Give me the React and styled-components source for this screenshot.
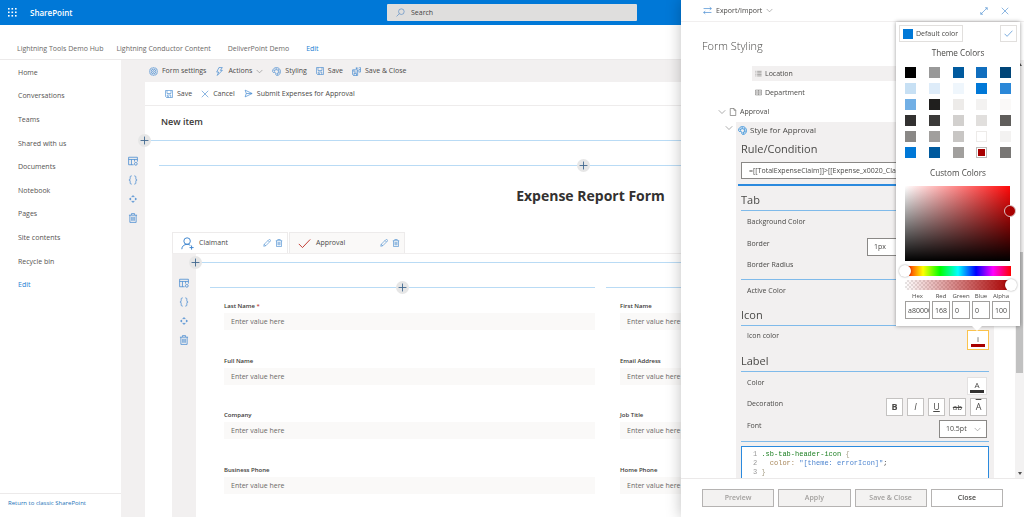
import React, { useState } from 'react';
import styled, { createGlobalStyle } from 'styled-components';

const GlobalStyle = createGlobalStyle`
  * {
    box-sizing: border-box;
  }

  body {
    margin: 0;
    background: #fff;
    color: #4a4947;
    font-family: 'Open Sans', 'Noto Sans', sans-serif;
    font-size: 7px;
    line-height: 12px;
    overflow: hidden;
  }

  button, input, select {
    font: inherit;
    color: inherit;
    margin: 0;
    padding: 0;
    border: 0;
    border-radius: 0;
    background: transparent;
    outline: none;
  }

  button {
    cursor: pointer;
  }

  h1, h2, h3, p, ul {
    margin: 0;
    padding: 0;
    font-weight: 400;
    list-style: none;
  }

  a {
    color: inherit;
    text-decoration: none;
  }
`;

/* icons */

const Svg = styled.svg`
  width: ${(p) => p.$size || 9}px;
  height: ${(p) => p.$size || 9}px;
  flex: none;
  display: block;
  fill: none;
  stroke: ${(p) => p.$color || '#3f86cf'};
  stroke-width: ${(p) => p.$weight || 1.2};
`;

const shapes = {
  settings: (
    <>
      <path d="M8 .8l1.6 1.1 1.9-.4 1 1.7 1.8.8v1.9L15.400 8l-1.100 2.100v1.900l-1.800.8-1 1.700-1.900-.4L8 15.200l-1.600-1.100-1.900.4-1-1.700-1.800-.8v-1.900L.6 8l1.100-2.100V4l1.800-.8 1-1.700 1.900.4z" />
      <circle cx="8" cy="8" r="4.200" />
      <circle cx="8" cy="8" r="1.600" />
    </>
  ),
  bolt: <path d="M7 1h6L9.500 6H13L4 15l2.500-6H3z" />,
  chevron: <path d="M1.500 4.500L8 11l6.500-6.500" />,
  palette: (
    <>
      <path d="M8 1C4 1 1 4 1 7.500c0 2 1.500 2.500 3 2.200 1.600-.3 2.800.3 2.600 2C6.400 14 7.500 15 9 15c3.500 0 6-3 6-7s-3-7-7-7z" />
      <circle cx="4.500" cy="6.500" r="1" />
      <circle cx="7.500" cy="4" r="1" />
      <circle cx="11" cy="5.500" r="1" />
      <circle cx="12" cy="9" r="1" />
      <circle cx="9.800" cy="12" r="1" />
    </>
  ),
  save: <path d="M1 1h14v14H3L1 13zM4 1v6h8V1M4.500 15v-5h7v5M6.800 12v3" />,
  saveClose: (
    <>
      <path d="M1 5h9v10H2.500L1 13.500zM3.500 5v4h5M3.500 15v-3.500h4.500V15" />
      <path d="M6.500 2h5M8 1v3M13 1h2v8h-3M12 4.500h3M10 7h3" />
    </>
  ),
  close: <path d="M1.500 1.500l13 13M14.500 1.500l-13 13" />,
  send: <path d="M2 2l12.500 6L2 14l2-6zM4 8h10" />,
  table: (
    <>
      <path d="M9 14H1V2h14v7M1 5.500h14M5.500 5.500V14M10.500 5.500V9" />
      <circle cx="12.500" cy="12.500" r="2.200" />
    </>
  ),
  braces: <path d="M6 1.500H5C3.500 1.500 3.500 3 3.500 4.500S3.500 8 1.500 8c2 0 2 2 2 3.500s0 3 1.500 3h1M10 1.500h1c1.500 0 1.500 1.500 1.500 3S12.500 8 14.500 8c-2 0-2 2-2 3.500s0 3-1.500 3h-1" />,
  move: <path d="M6.200 4.200L8 2.400l1.800 1.800zM6.200 11.800L8 13.600l1.800-1.800zM4.200 6.200L2.400 8l1.800 1.800zM11.800 6.200L13.600 8l-1.800 1.800z" />,
  trash: <path d="M1.500 3.500h13M5.500 3V1h5v2M3 3.500V15h10V3.500M6 6v6.500M8 6v6.500M10 6v6.500" />,
  pencil: <path d="M1.500 14.500l1-4L11.500 1.500a1.500 1.500 0 0 1 3 3L5.500 13.500zM10 3l3 3M2.500 10.500l3 3" />,
  person: (
    <>
      <circle cx="7.500" cy="5" r="4" />
      <path d="M1 15c0-3.500 2.800-6 6.500-6 1.700 0 3 .5 4 1.300M13 10.500v5M10.500 13h5" />
    </>
  ),
  check: <path d="M1 8.500l4.500 4.500L15 3" />,
  search: (
    <>
      <circle cx="9.500" cy="6.500" r="5" />
      <path d="M6 10l-5 5" />
    </>
  ),
  swap: <path d="M1 4.500h14M12 2l2.800 2.500L12 7M15 11.500H1M4 9l-2.800 2.500L4 14" />,
  expand: <path d="M10 1.500h4.500V6M14.500 1.500l-13 13M1.500 10v4.500H6" />,
  page: <path d="M2.500 1h7.500l3.500 3.500V15h-11zM10 1v3.500h3.500" />,
  list: <path d="M1 3h2M5 3h10M1 6.500h2M5 6.500h10M1 10h2M5 10h10M1 13.500h2M5 13.500h10" />,
  lookup: <path d="M1 2.500h14v11H1zM8 2.500v11M3 5.500h3M3 8h3M3 10.500h3M10 5.500h3M10 8h3M10 10.500h3" />,
  plus: <path d="M8 1v14M1 8h14" />,
};

const Icon = ({ name, size, color, weight }) => (
  <Svg viewBox="0 0 16 16" $size={size} $color={color} $weight={weight} aria-hidden="true">
    {shapes[name]}
  </Svg>
);

const Waffle = () => (
  <Svg viewBox="0 0 9 9" $size={9}>
    {[0, 3.5, 7].map((y) =>
      [0, 3.5, 7].map((x) => (
        <rect key={`${x}-${y}`} x={x} y={y} width="1.600" height="1.600" fill="#fff" stroke="none" />
      ))
    )}
  </Svg>
);

/* suite header */

const SuiteBar = styled.header`
  display: grid;
  grid-template-columns: 1fr 250px 1fr;
  align-items: center;
  height: 25px;
  background: #0078d7;
`;

const Brand = styled.div`
  display: flex;
  align-items: center;
  gap: 13px;
  padding-left: 8px;
  color: #fff;
  font-size: 8px;
  font-weight: 600;
`;

const SearchBox = styled.label`
  display: flex;
  align-items: center;
  gap: 6px;
  height: 17px;
  padding-left: 9px;
  border-radius: 1px;
  background: #dfdedd;

  input {
    flex: 1;
  }

  input::placeholder {
    color: #444;
    opacity: 1;
  }
`;

const HubNav = styled.nav`
  display: flex;
  align-items: flex-end;
  height: 35px;
  padding: 0 17px 4px;
  gap: 13px;
  border-bottom: 1px solid #eceaea;
  color: #6b6967;
`;

const HubLink = styled.a`
  margin-right: ${(p) => (p.$wide ? 4 : 0)}px;
  color: ${(p) => (p.$blue ? '#1b80d3' : 'inherit')};
`;

/* page */

const Page = styled.div`
  display: flex;
  flex-direction: column;
  height: 100vh;
  overflow: hidden;
`;

const Columns = styled.div`
  display: flex;
  flex: 1;
  min-height: 0;
`;

const SideNav = styled.nav`
  display: flex;
  flex-direction: column;
  justify-content: space-between;
  width: 121px;
  flex: none;
  padding-top: 1px;
`;

const NavList = styled.ul`
  display: grid;
  grid-template-rows: repeat(10, 1fr);
  align-items: center;
  height: 236px;
  padding-left: 18px;
`;

const NavLink = styled.a`
  color: ${(p) => (p.$blue ? '#1b80d3' : '#555351')};
`;

const ClassicLink = styled.a`
  height: 24px;
  padding: 3px 8px;
  border-top: 1px solid #eceaea;
  font-size: 6px;
  color: #1b72b8;
`;

const Editor = styled.main`
  display: flex;
  flex-direction: column;
  flex: 1;
  min-width: 0;
  background: #f2f0f0;
`;

const CommandBar = styled.div`
  display: flex;
  align-items: center;
  gap: 9px;
  height: 22px;
  flex: none;
  padding-left: 28px;
`;

const ActionBar = styled.div`
  display: flex;
  align-items: center;
  gap: 9px;
  height: 24px;
  padding-left: 20px;
  border-bottom: 1px solid #eeecec;
`;

const Command = styled.button`
  display: flex;
  align-items: center;
  gap: 4px;
  white-space: nowrap;
`;

const EditorBody = styled.div`
  display: flex;
  flex: 1;
  min-height: 0;
`;

const Rail = styled.div`
  display: flex;
  flex-direction: column;
  align-items: center;
  gap: 9px;
  flex: none;
  width: 24px;
  padding-top: ${(p) => p.$top}px;
  background: #f2f0f0;
`;

const IconButton = styled.button`
  display: flex;
  align-items: center;
  justify-content: center;
`;

const FormArea = styled.div`
  flex: 1;
  min-width: 0;
  background: #fff;
`;

const ItemTitle = styled.h2`
  height: 34px;
  padding: 10px 16px;
  font-size: 9px;
  font-weight: 600;
  color: #3a3836;
`;

const Divider = styled.div`
  position: relative;
  height: 1px;
  background: #b9dbf5;
`;

const AddButton = styled.button`
  position: absolute;
  top: -6px;
  left: ${(p) => (p.$middle ? '50%' : '0')};
  display: flex;
  align-items: center;
  justify-content: center;
  width: 13px;
  height: 13px;
  margin-left: -7px;
  border-radius: 50%;
  background: #e6e6e6;
`;

const Section = styled.section`
  padding: 24px 15px 0 14px;
`;

const SectionBody = styled.div`
  padding: 20px 0 0 13px;
`;

const FormTitle = styled.h1`
  margin-bottom: 26px;
  text-align: center;
  font-size: 14px;
  line-height: 20px;
  font-weight: 700;
  color: #333130;
`;

const Tabs = styled.div`
  display: flex;
  gap: 1px;
`;

const Tab = styled.div`
  display: flex;
  align-items: center;
  gap: 4px;
  width: 116px;
  height: 21px;
  padding: 0 4px 0 8px;
  border: 1px solid #edebeb;
  border-bottom: 0;
  background: ${(p) => (p.$active ? '#fff' : '#faf9f8')};
`;

const TabButton = styled.button`
  display: flex;
  flex: 1;
  align-items: center;
  gap: 5px;
`;

const TabPanel = styled.div`
  display: flex;
  height: 280px;
  border-top: 1px solid #f0eeee;
`;

const TabBody = styled.div`
  flex: 1;
  min-width: 0;
  padding-top: 8px;
`;

const FieldColumns = styled.div`
  display: grid;
  grid-template-columns: 1fr 1fr;
  gap: 11px;
  padding: 24px 18px 0 14px;
`;

const Fields = styled.div`
  display: grid;
  grid-template-rows: repeat(4, 1fr);
  height: 230px;
  padding: 12px 0 0 14px;
`;

const Field = styled.label`
  display: block;
  font-size: 6px;
  font-weight: 600;
  color: #3a3836;

  em {
    font-style: normal;
    color: #c0392f;
  }

  input {
    display: block;
    width: 100%;
    height: 17px;
    margin-top: 1px;
    padding-left: 7px;
    background: #faf9f8;
    font-size: 7px;
    font-weight: 400;
  }

  input::placeholder {
    color: #6b6967;
    opacity: 1;
  }
`;

/* styling panel */

const Panel = styled.aside`
  position: fixed;
  top: 0;
  right: 0;
  bottom: 0;
  display: flex;
  flex-direction: column;
  width: 343px;
  background: #fff;
  box-shadow: 0 0 14px rgba(0, 0, 0, 0.25);
`;

const PanelBar = styled.div`
  display: flex;
  align-items: center;
  justify-content: space-between;
  flex: none;
  height: 22px;
  padding: 0 15px 0 22px;
  border-bottom: 1px solid #f1efef;
`;

const BarGroup = styled.div`
  display: flex;
  gap: 13px;
`;

const PanelTitle = styled.h2`
  flex: none;
  height: 38px;
  padding: 15px 21px 0;
  font-size: 11px;
  line-height: 18px;
  font-weight: 300;
`;

const PanelBody = styled.div`
  display: flex;
  flex: 1;
  min-height: 0;
  overflow: hidden;
`;

const PanelScroll = styled.div`
  flex: 1;
  min-width: 0;
  padding: 6px 21px 0 37px;
`;

const ScrollBar = styled.div`
  display: flex;
  flex-direction: column;
  align-items: center;
  justify-content: space-between;
  width: 9px;
  padding: 3px 0;
  background: #f3f2f2;
`;

const ScrollThumb = styled.div`
  width: 7px;
  height: 121px;
  margin-top: 86px;
  background: #c1c1c1;
`;

const Caret = styled.span`
  border: 2px solid transparent;
  border-width: ${(p) => (p.$up ? '0 2px 3px' : '3px 2px 0')};
  border-${(p) => (p.$up ? 'bottom' : 'top')}-color: #505050;
`;

const TreeRow = styled.div`
  display: flex;
  align-items: center;
  gap: 3px;
  height: 15px;
  margin: 0 0 ${(p) => p.$gap || 4}px ${(p) => p.$indent}px;
  padding-left: ${(p) => (p.$field ? 3 : 0)}px;
  background: ${(p) => (p.$shade ? '#f2f0f0' : 'transparent')};
`;

const StyleNode = styled.div`
  display: flex;
  align-items: flex-start;
  gap: 3px;
  padding-left: 7px;
`;

const NodeChevron = styled.button`
  padding-top: 2px;
`;

const StyleBox = styled.div`
  flex: 1;
  min-width: 0;
  padding: 0 5px;
  background: #f2f0f0;
`;

const NodeName = styled.div`
  display: flex;
  align-items: center;
  gap: 3px;
  height: 16px;
  font-size: 8px;
  margin-left: -3px;
`;

const GroupTitle = styled.h3`
  height: 24px;
  padding-top: ${(p) => (p.$first ? 3 : 6)}px;
  font-size: 11px;
  line-height: 16px;
`;

const RuleInput = styled.input`
  display: block;
  width: 100%;
  height: 17px;
  padding-left: 7px;
  border: 1px solid #8a8886;
  background: #fff;
`;

const Rule = styled.div`
  height: ${(p) => (p.$strong ? 2 : 1)}px;
  margin: ${(p) => (p.$strong ? '5px -3px 0' : '0')};
  background: ${(p) => (p.$strong ? '#2b8ade' : '#7fbaea')};
`;

const Setting = styled.div`
  display: flex;
  align-items: flex-start;
  justify-content: space-between;
  height: ${(p) => p.$height || 22}px;
  padding: ${(p) => p.$top || 1}px 2px 0 6px;
`;

const SettingName = styled.label`
  padding-top: ${(p) => p.$drop || 0}px;
`;

const SelectBox = styled.span`
  display: flex;
  align-items: center;
  width: ${(p) => p.$width}px;
  height: 18px;
  padding: 0 5px 0 6px;
  border: 1px solid #8a8886;
  background: #fff;

  select {
    flex: 1;
    min-width: 0;
    appearance: none;
  }
`;

const SwatchButton = styled.button`
  display: flex;
  flex-direction: column;
  align-items: center;
  justify-content: center;
  width: ${(p) => (p.$open ? 22 : 20)}px;
  height: ${(p) => (p.$open ? 20 : 18)}px;
  margin-right: ${(p) => (p.$open ? -2 : 0)}px;
  border: 1px solid ${(p) => (p.$open ? '#fbc34d' : '#e3e1e1')};
  background: #fff;
  font-size: 8px;
  line-height: 10px;

  &::after {
    content: '';
    width: 14px;
    height: 3px;
    background: ${(p) => p.$color};
  }
`;

const Decorations = styled.div`
  display: flex;
  gap: 4px;
`;

const Decoration = styled.button`
  width: 17px;
  height: 18px;
  border: 1px solid #c4c2c1;
  background: #fff;
  font-size: ${(p) => (p.$kind === 'line-through' ? 8 : 9)}px;
  font-weight: ${(p) => (p.$kind === 'bold' ? 700 : 400)};
  font-style: ${(p) => (p.$kind === 'italic' ? 'italic' : 'normal')};
  text-decoration: ${(p) => p.$kind};
`;

const CodeBox = styled.pre`
  height: 60px;
  margin: 4px 0 0;
  padding: 3px 0 0 11px;
  border: 1px solid #2b8ade;
  background: #fff;
  font-family: 'Liberation Mono', monospace;
  font-size: 7px;
  line-height: 9px;
`;

const Code = styled.span`
  color: ${(p) => p.$color};
`;

const PanelFooter = styled.footer`
  display: grid;
  grid-template-columns: repeat(4, 1fr);
  gap: 4px;
  flex: none;
  height: 39px;
  padding: 10px 21px 10px 21px;
  border-top: 1px solid #ebe9e9;
`;

const FooterButton = styled.button`
  height: 18px;
  border: 1px solid #b5b3b2;
  background: #fff;
  font-weight: 600;

  &:disabled {
    background: #f3f2f1;
    color: #a19f9d;
  }
`;

/* colour picker */

const Callout = styled.div`
  position: absolute;
  top: 22px;
  right: 4px;
  width: 124px;
  padding: 3px;
  background: #fff;
  box-shadow: 0 0 4px rgba(0, 0, 0, 0.4);

  &::after {
    content: '';
    position: absolute;
    left: 75px;
    bottom: -5px;
    border: 6px solid transparent;
    border-width: 6px 6px 0;
    border-top-color: #fff;
  }
`;

const CalloutTop = styled.div`
  display: flex;
  justify-content: space-between;
`;

const CalloutButton = styled.button`
  display: flex;
  align-items: center;
  gap: 3px;
  height: 17px;
  padding: 0 ${(p) => (p.$square ? 3 : 4)}px 0 3px;
  border: 1px solid #e1dfdd;
`;

const DefaultSwatch = styled.span`
  width: 10px;
  height: 10px;
  background: #0078d7;
`;

const CalloutTitle = styled.h3`
  height: ${(p) => (p.$theme ? 25 : 28)}px;
  padding-top: ${(p) => (p.$theme ? 5 : 9)}px;
  text-align: center;
`;

const Swatches = styled.div`
  display: grid;
  grid-template-columns: repeat(5, 11px);
  justify-content: space-between;
  row-gap: 5px;
  padding: 0 6px;
`;

const Swatch = styled.button`
  width: 11px;
  height: 11px;
  border: ${(p) => (p.$picked ? '1px solid #bdbbb9' : p.$edge ? '1px solid #edebe9' : 0)};
  background: ${(p) => p.$color};
  background-clip: ${(p) => (p.$picked ? 'content-box' : 'border-box')};
  padding: ${(p) => (p.$picked ? 1 : 0)}px;
`;

const Spectrum = styled.div`
  position: relative;
  height: 75px;
  margin: 0 7px 0 6px;
  background: linear-gradient(to top, #000, transparent), linear-gradient(to right, #fff, #ff0a0a);
`;

const SpectrumThumb = styled.span`
  position: absolute;
  right: -6px;
  top: 19px;
  width: 12px;
  height: 12px;
  border: 1px solid #d9c4c4;
  border-radius: 50%;
  background: #a80000;
`;

const hue = 'linear-gradient(to right, #f00, #ff0 17%, #0f0 33%, #0ff 50%, #00f 67%, #f0f 83%, #f00)';
const alpha =
  'linear-gradient(to right, transparent, #a80000), repeating-conic-gradient(#e6e4e4 0 25%, #fff 0 50%) 0 0 / 4px 4px';

const Slider = styled.div`
  height: 10px;
  margin: ${(p) => (p.$hue ? 5 : 4)}px 6px 0 6px;
  background: ${(p) => (p.$hue ? hue : alpha)};

  input {
    display: block;
    width: calc(100% + 12px);
    height: 10px;
    margin: 0 -6px;
    appearance: none;
  }

  input::-webkit-slider-thumb {
    appearance: none;
    width: 12px;
    height: 12px;
    border-radius: 50%;
    background: #fff;
    box-shadow: 0 0 2px rgba(0, 0, 0, 0.4);
  }
`;

const Channels = styled.div`
  display: grid;
  grid-template-columns: 25px repeat(4, 1fr);
  gap: 2px;
  padding: 1px 7px 4px 6px;
`;

const Channel = styled.label`
  display: flex;
  flex-direction: column;
  align-items: center;
  min-width: 0;
  font-size: 6px;
  line-height: 10px;

  input {
    width: 100%;
    height: 18px;
    padding-left: 2px;
    border: 1px solid #a19f9d;
    font-size: 7px;
  }
`;

const navItems = [
  'Home',
  'Conversations',
  'Teams',
  'Shared with us',
  'Documents',
  'Notebook',
  'Pages',
  'Site contents',
  'Recycle bin',
];

const leftFields = ['Last Name', 'Full Name', 'Company', 'Business Phone'];
const rightFields = ['First Name', 'Email Address', 'Job Title', 'Home Phone'];

const themeColors = [
  '#000000', '#999999', '#005a9e', '#106ebe', '#004578',
  '#c7e0f4', '#deecf9', '#eff6fc', '#0078d7', '#2b88d8',
  '#71afe5', '#201f1e', '#edebe9', '#f3f2f1', '#faf9f8',
  '#323130', '#3b3a39', '#d2d0ce', '#e1dfdd', '#605e5c',
  '#8a8886', '#a19f9d', '#c8c6c4', '#ffffff', '#f3f2f1',
  '#0078d7', '#005a9e', '#a19f9d', '#a80000', '#797775',
];

const channels = [
  ['Hex', 'a80000'],
  ['Red', '168'],
  ['Green', '0'],
  ['Blue', '0'],
  ['Alpha', '100'],
];

const RailTools = ({ top }) => (
  <Rail $top={top}>
    {['table', 'braces', 'move', 'trash'].map((name) => (
      <IconButton key={name} aria-label={name}>
        <Icon name={name} size={10} />
      </IconButton>
    ))}
  </Rail>
);

const AddLine = ({ middle }) => (
  <Divider>
    <AddButton $middle={middle} aria-label="Add">
      <Icon name="plus" size={9} color="#41688f" weight={1.6} />
    </AddButton>
  </Divider>
);

const FieldList = ({ names }) => (
  <Fields>
    {names.map((name) => (
      <Field key={name}>
        {name} {name === 'Last Name' && <em>*</em>}
        <input type="text" placeholder="Enter value here" />
      </Field>
    ))}
  </Fields>
);

const FormTab = ({ icon, color, size, name, active, onSelect }) => (
  <Tab $active={active}>
    <TabButton role="tab" aria-selected={active} onClick={onSelect}>
      <Icon name={icon} size={size} color={color} />
      {name}
    </TabButton>
    <IconButton aria-label={`Edit ${name}`}>
      <Icon name="pencil" size={8} />
    </IconButton>
    <IconButton aria-label={`Delete ${name}`}>
      <Icon name="trash" size={8} />
    </IconButton>
  </Tab>
);

const ColorCallout = () => {
  const [picked, setPicked] = useState(28);

  return (
    <Callout role="dialog" aria-label="Icon color">
      <CalloutTop>
        <CalloutButton>
          <DefaultSwatch />
          Default color
        </CalloutButton>
        <CalloutButton $square aria-label="Apply color">
          <Icon name="check" size={9} />
        </CalloutButton>
      </CalloutTop>
      <CalloutTitle $theme>Theme Colors</CalloutTitle>
      <Swatches>
        {themeColors.map((color, index) => (
          <Swatch
            key={index}
            aria-label={color}
            $color={color}
            $edge={color === '#ffffff'}
            $picked={index === picked}
            onClick={() => setPicked(index)}
          />
        ))}
      </Swatches>
      <CalloutTitle>Custom Colors</CalloutTitle>
      <Spectrum>
        <SpectrumThumb />
      </Spectrum>
      <Slider $hue>
        <input type="range" min="0" max="359" defaultValue="0" aria-label="Hue" />
      </Slider>
      <Slider>
        <input type="range" min="0" max="100" defaultValue="100" aria-label="Alpha" />
      </Slider>
      <Channels>
        {channels.map(([name, value]) => (
          <Channel key={name}>
            {name}
            <input type="text" defaultValue={value} />
          </Channel>
        ))}
      </Channels>
    </Callout>
  );
};

const StylingPanel = () => (
  <Panel>
    <PanelBar>
      <Command>
        <Icon name="swap" size={9} />
        Export/Import
        <Icon name="chevron" size={7} color="#777" />
      </Command>
      <BarGroup>
        <IconButton aria-label="Expand">
          <Icon name="expand" size={8} />
        </IconButton>
        <IconButton aria-label="Close panel">
          <Icon name="close" size={8} />
        </IconButton>
      </BarGroup>
    </PanelBar>
    <PanelTitle>Form Styling</PanelTitle>
    <PanelBody>
      <PanelScroll>
        <TreeRow $indent={34} $field $shade>
          <Icon name="list" size={7} color="#605e5c" />
          Location
        </TreeRow>
        <TreeRow $indent={34} $field>
          <Icon name="lookup" size={7} color="#605e5c" />
          Department
        </TreeRow>
        <TreeRow $indent={0} $gap={3}>
          <IconButton aria-label="Collapse Approval">
            <Icon name="chevron" size={8} color="#777" />
          </IconButton>
          <Icon name="page" size={8} color="#605e5c" />
          Approval
        </TreeRow>
        <StyleNode>
          <NodeChevron aria-label="Collapse style">
            <Icon name="chevron" size={8} color="#777" />
          </NodeChevron>
          <StyleBox>
            <NodeName>
              <Icon name="palette" size={9} color="#0078d7" />
              Style for Approval
            </NodeName>
            <GroupTitle $first>Rule/Condition</GroupTitle>
            <RuleInput aria-label="Rule" defaultValue="=[[TotalExpenseClaim]]>[[Expense_x0020_ClaimLimit]]" />
            <Rule $strong />
            <GroupTitle>Tab</GroupTitle>
            <Rule />
            <Setting $top={5} $height={26}>
              <SettingName>Background Color</SettingName>
            </Setting>
            <Setting $height={21}>
              <SettingName htmlFor="border">Border</SettingName>
              <SelectBox $width={120}>
                <select id="border" defaultValue="1px">
                  <option>1px</option>
                  <option>2px</option>
                </select>
              </SelectBox>
            </Setting>
            <Setting $height={21}>
              <SettingName>Border Radius</SettingName>
            </Setting>
            <Rule />
            <Setting $top={5} $height={21}>
              <SettingName>Active Color</SettingName>
            </Setting>
            <GroupTitle>Icon</GroupTitle>
            <Rule />
            <Setting $top={4} $height={21}>
              <SettingName>Icon color</SettingName>
              <SwatchButton $open $color="#a80000">
                i
              </SwatchButton>
            </Setting>
            <GroupTitle>Label</GroupTitle>
            <Rule />
            <Setting $top={5} $height={25}>
              <SettingName>Color</SettingName>
              <SwatchButton $color="#323130">A</SwatchButton>
            </Setting>
            <Setting>
              <SettingName>Decoration</SettingName>
              <Decorations>
                <Decoration $kind="bold">B</Decoration>
                <Decoration $kind="italic">I</Decoration>
                <Decoration $kind="underline">U</Decoration>
                <Decoration $kind="line-through">ab</Decoration>
                <Decoration $kind="overline">A</Decoration>
              </Decorations>
            </Setting>
            <Setting>
              <SettingName htmlFor="font">Font</SettingName>
              <SelectBox $width={48}>
                <select id="font" defaultValue="10.5pt">
                  <option>10.5pt</option>
                  <option>12pt</option>
                </select>
                <Icon name="chevron" size={7} color="#777" />
              </SelectBox>
            </Setting>
            <Rule />
            <CodeBox>
              <Code $color="#999">1 </Code>
              <Code $color="#1e8024">.sb-tab-header-icon</Code>
              <Code $color="#a9a18a">{' {\n'}</Code>
              <Code $color="#999">2 </Code>
              <Code $color="#a8875a">{'  color: '}</Code>
              <Code $color="#4f86d0">"[theme: errorIcon]"</Code>
              {';\n'}
              <Code $color="#999">3 </Code>
              <Code $color="#a9a18a">{'}'}</Code>
            </CodeBox>
          </StyleBox>
        </StyleNode>
      </PanelScroll>
      <ScrollBar>
        <Caret $up />
        <ScrollThumb />
        <Caret />
      </ScrollBar>
    </PanelBody>
    <PanelFooter>
      <FooterButton disabled>Preview</FooterButton>
      <FooterButton disabled>Apply</FooterButton>
      <FooterButton disabled>Save &amp; Close</FooterButton>
      <FooterButton>Close</FooterButton>
    </PanelFooter>
    <ColorCallout />
  </Panel>
);

const App = () => {
  const [tab, setTab] = useState('Claimant');

  return (
    <>
      <GlobalStyle />
      <Page>
        <SuiteBar>
          <Brand>
            <Waffle />
            SharePoint
          </Brand>
          <SearchBox>
            <Icon name="search" size={9} color="#5b8cc4" />
            <input type="text" placeholder="Search" aria-label="Search" />
          </SearchBox>
        </SuiteBar>
        <HubNav>
          <HubLink href="#hub">Lightning Tools Demo Hub</HubLink>
          <HubLink href="#conductor" $wide>Lightning Conductor Content</HubLink>
          <HubLink href="#deliver" $wide>DeliverPoint Demo</HubLink>
          <HubLink href="#edit" $blue>Edit</HubLink>
        </HubNav>
        <Columns>
          <SideNav>
            <NavList>
              {navItems.map((item) => (
                <li key={item}>
                  <NavLink href="#page">{item}</NavLink>
                </li>
              ))}
              <li>
                <NavLink href="#edit" $blue>Edit</NavLink>
              </li>
            </NavList>
            <ClassicLink href="#classic">Return to classic SharePoint</ClassicLink>
          </SideNav>
          <Editor>
            <CommandBar>
              <Command>
                <Icon name="settings" />
                Form settings
              </Command>
              <Command>
                <Icon name="bolt" />
                Actions
                <Icon name="chevron" size={7} color="#777" />
              </Command>
              <Command>
                <Icon name="palette" />
                Styling
              </Command>
              <Command>
                <Icon name="save" size={8} />
                Save
              </Command>
              <Command>
                <Icon name="saveClose" />
                Save &amp; Close
              </Command>
            </CommandBar>
            <EditorBody>
              <RailTools top={74} />
              <FormArea>
                <ActionBar>
                  <Command>
                    <Icon name="save" size={8} />
                    Save
                  </Command>
                  <Command>
                    <Icon name="close" size={8} />
                    Cancel
                  </Command>
                  <Command>
                    <Icon name="send" />
                    Submit Expenses for Approval
                  </Command>
                </ActionBar>
                <ItemTitle>New item</ItemTitle>
                <AddLine />
                <Section>
                  <AddLine middle />
                  <SectionBody>
                    <FormTitle>Expense Report Form</FormTitle>
                    <Tabs role="tablist">
                      <FormTab
                        icon="person"
                        size={13}
                        name="Claimant"
                        active={tab === 'Claimant'}
                        onSelect={() => setTab('Claimant')}
                      />
                      <FormTab
                        icon="check"
                        size={13}
                        color="#c0392f"
                        name="Approval"
                        active={tab === 'Approval'}
                        onSelect={() => setTab('Approval')}
                      />
                    </Tabs>
                    <TabPanel role="tabpanel">
                      <RailTools top={24} />
                      <TabBody>
                        <AddLine />
                        <FieldColumns>
                          <div>
                            <AddLine middle />
                            <FieldList names={leftFields} />
                          </div>
                          <div>
                            <AddLine middle />
                            <FieldList names={rightFields} />
                          </div>
                        </FieldColumns>
                      </TabBody>
                    </TabPanel>
                  </SectionBody>
                </Section>
              </FormArea>
            </EditorBody>
          </Editor>
        </Columns>
      </Page>
      <StylingPanel />
    </>
  );
};

export default App;
